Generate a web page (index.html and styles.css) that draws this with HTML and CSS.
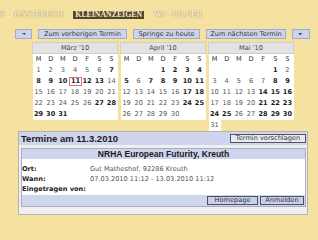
FILE: index.html
```html
<!DOCTYPE html>
<html lang="de">
<head>
<meta charset="UTF-8">
<title>Kleinanzeigen - Termine</title>
<link rel="stylesheet" href="styles.css">
</head>
<body>
<div class="nav">
    <span class="nav-item">S</span>
    <span class="nav-item">Gästebuch</span>
    <span class="nav-item active">Kleinanzeigen</span>
    <span class="nav-item">WJ - Bilder</span>
</div>
<div class="toolbar">
    <button class="btn arrow-prev">&#9668;</button>
    <button class="btn prev">Zum vorherigen Termin</button>
    <button class="btn today">Springe zu heute</button>
    <button class="btn next">Zum nächsten Termin</button>
    <button class="btn arrow-next">&#9658;</button>
</div>
<div class="calendars">
    <table class="cal">
        <tr><th class="month" colspan="7">März '10</th></tr>
        <tr class="dn"><td>M</td><td>D</td><td>M</td><td>D</td><td>F</td><td>S</td><td>S</td></tr>
        <tr><td>1</td><td>2</td><td>3</td><td>4</td><td>5</td><td>6</td><td class="b">7</td></tr>
        <tr><td class="b">8</td><td class="b">9</td><td class="b">10</td><td class="b"><span class="today-mark">11</span></td><td class="b">12</td><td class="b">13</td><td>14</td></tr>
        <tr><td>15</td><td>16</td><td>17</td><td>18</td><td>19</td><td>20</td><td>21</td></tr>
        <tr><td>22</td><td>23</td><td>24</td><td>25</td><td>26</td><td class="b">27</td><td class="b">28</td></tr>
        <tr><td class="b">29</td><td class="b">30</td><td class="b">31</td><td></td><td></td><td></td><td></td></tr>
    </table>
    <table class="cal">
        <tr><th class="month" colspan="7">April '10</th></tr>
        <tr class="dn"><td>M</td><td>D</td><td>M</td><td>D</td><td>F</td><td>S</td><td>S</td></tr>
        <tr><td></td><td></td><td></td><td class="b">1</td><td class="b">2</td><td class="b">3</td><td class="b">4</td></tr>
        <tr><td class="b">5</td><td>6</td><td class="b">7</td><td class="b">8</td><td class="b">9</td><td class="b">10</td><td class="b">11</td></tr>
        <tr><td>12</td><td>13</td><td>14</td><td>15</td><td>16</td><td class="b">17</td><td class="b">18</td></tr>
        <tr><td>19</td><td>20</td><td>21</td><td>22</td><td>23</td><td class="b">24</td><td class="b">25</td></tr>
        <tr><td>26</td><td>27</td><td>28</td><td>29</td><td>30</td><td></td><td></td></tr>
    </table>
    <table class="cal">
        <tr><th class="month" colspan="7">Mai '10</th></tr>
        <tr class="dn"><td>M</td><td>D</td><td>M</td><td>D</td><td>F</td><td>S</td><td>S</td></tr>
        <tr><td></td><td></td><td></td><td></td><td></td><td class="b">1</td><td>2</td></tr>
        <tr><td>3</td><td>4</td><td>5</td><td>6</td><td>7</td><td class="b">8</td><td class="b">9</td></tr>
        <tr><td>10</td><td>11</td><td>12</td><td>13</td><td class="b">14</td><td class="b">15</td><td class="b">16</td></tr>
        <tr><td>17</td><td>18</td><td>19</td><td>20</td><td class="b">21</td><td class="b">22</td><td class="b">23</td></tr>
        <tr><td class="b">24</td><td class="b">25</td><td>26</td><td>27</td><td class="b">28</td><td class="b">29</td><td class="b">30</td></tr>
        <tr><td>31</td></tr>
    </table>
</div>
<div class="events">
    <div class="events-head">
        <span class="events-title">Termine am 11.3.2010</span>
        <button class="btn-light suggest">Termin vorschlagen</button>
    </div>
    <div class="event">
        <div class="event-title">NRHA European Futurity, Kreuth</div>
        <div class="event-body">
            <span class="label">Ort:</span><span class="value">Gut Matheshof, 92286 Kreuth</span>
            <span class="label">Wann:</span><span class="value">07.03.2010 11:12 - 13.03.2010 11:12</span>
            <span class="label">Eingetragen von:</span><span class="value"></span>
        </div>
        <div class="event-foot">
            <button class="btn-small homepage">Homepage</button>
            <button class="btn-small signup">Anmelden</button>
        </div>
    </div>
</div>
</body>
</html>
```

FILE: styles.css
```css
body, html {
    margin: 0;
    padding: 0;
    height: 100vh;
    overflow: hidden;
}
body {
    background-color: #f5e2a0;
    font-family: "DejaVu Sans", Verdana, sans-serif;
    font-size: 6.6px;
    color: #333;
}
.nav {
    height: 18px;
    padding-top: 11px;
    display: flex;
    align-items: flex-start;
    gap: 10px;
    font-family: "Liberation Serif", serif;
    font-weight: bold;
    font-size: 7.8px;
    line-height: 8px;
    text-transform: uppercase;
}
.nav-item {
    color: #fbf3da;
    text-shadow: 0 0 1px #a98e52, 0 0 1px #a98e52;
}
.nav-item.active {
    background-color: #54462a;
    color: #f4ecd2;
    text-shadow: none;
    padding: 0 2px;
}
.toolbar {
    display: flex;
    gap: 6px;
    padding-left: 15px;
    height: 10px;
}
.btn {
    box-sizing: border-box;
    height: 10px;
    padding: 0;
    border: 1px solid #a3abc8;
    background-color: #ccd3ec;
    color: #333;
    font-family: "DejaVu Sans", Verdana, sans-serif;
    font-size: 6.6px;
    line-height: 8px;
}
.arrow-prev { width: 17px; font-size: 4.5px; }
.prev { width: 89px; }
.today { width: 67px; }
.next { width: 80px; }
.arrow-next { width: 18px; font-size: 4.5px; }
.calendars {
    display: flex;
    align-items: flex-start;
    gap: 2px;
    padding-left: 32px;
    margin-top: 3px;
    height: 88px;
}
.cal {
    width: 86px;
    table-layout: fixed;
    border-collapse: collapse;
    font-size: 6.6px;
}
.cal th.month {
    height: 10px;
    padding: 0;
    line-height: 8px;
    background-color: #e3e3e3;
    border: 1px solid #cfcfcf;
    font-weight: normal;
    color: #444;
}
.cal td {
    height: 11px;
    padding: 0;
    line-height: 11px;
    text-align: center;
    background-color: #fff;
    color: #555;
}
.cal .dn td {
    color: #333;
}
.cal td.b {
    font-weight: bold;
    color: #1c1c1c;
}
.today-mark {
    display: inline-block;
    border: 1px solid #e57070;
    padding: 0 1px;
    line-height: 7px;
}
.events {
    box-sizing: border-box;
    width: 290px;
    height: 84px;
    margin-left: 18px;
    margin-top: 1px;
    border: 1px solid #b3b3b3;
    background-color: #efefef;
}
.events-head {
    height: 13px;
    display: flex;
    justify-content: space-between;
    align-items: center;
    padding: 0 1px 0 2px;
    background-color: #cfd5ec;
}
.events-title {
    font-family: "Liberation Sans", Arial, sans-serif;
    font-weight: bold;
    font-size: 9.5px;
    color: #1a1a1a;
}
.btn-light {
    box-sizing: border-box;
    width: 76px;
    height: 9px;
    padding: 0;
    border: 1px solid #555;
    background-color: #e7e9f1;
    color: #333;
    font-family: "DejaVu Sans", Verdana, sans-serif;
    font-size: 6.6px;
    line-height: 7px;
}
.event {
    margin: 3px 1px 0 2px;
    border: 1px solid #a8acbd;
    background-color: #fff;
}
.event-title {
    height: 10px;
    line-height: 10px;
    text-align: center;
    background-color: #cfd5ec;
    font-family: "Liberation Sans", Arial, sans-serif;
    font-weight: bold;
    font-size: 8.5px;
    color: #1a1a1a;
}
.event-body {
    display: grid;
    grid-template-columns: 68px 1fr;
    grid-auto-rows: 10px;
    align-items: center;
    padding: 5px 0 1px 0;
}
.label {
    font-weight: bold;
    color: #222;
}
.value {
    color: #555;
}
.event-foot {
    height: 11px;
    display: flex;
    justify-content: flex-end;
    align-items: center;
    gap: 2px;
    padding-right: 1px;
    background-color: #cfd5ec;
}
.btn-small {
    box-sizing: border-box;
    height: 9px;
    padding: 0;
    border: 1px solid #4d5166;
    background-color: #c9d0ea;
    color: #333;
    font-family: "DejaVu Sans", Verdana, sans-serif;
    font-size: 6.6px;
    line-height: 7px;
}
.homepage { width: 51px; }
.signup { width: 44px; }
```
